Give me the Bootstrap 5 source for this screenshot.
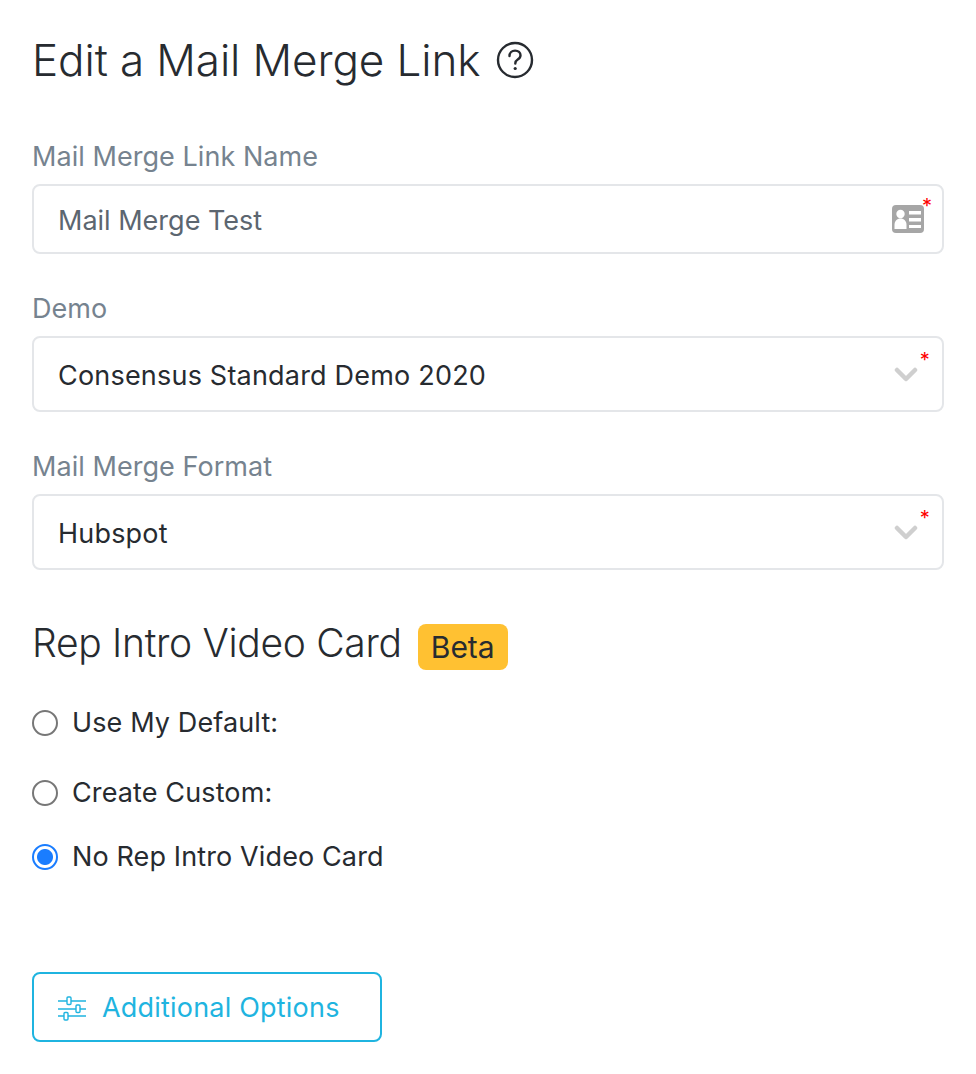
<!DOCTYPE html>
<html lang="en">
<head>
    <meta charset="UTF-8">
    <title>Edit a Mail Merge Link</title>
    <link href="https://cdn.jsdelivr.net/npm/bootstrap@5.3.3/dist/css/bootstrap.min.css" rel="stylesheet">
    <style>
        body {
            background: #fff;
            color: #272b30;
            font-family: Inter, "Liberation Sans", sans-serif;
        }
        .page-wrap {
            padding: 32px 32px 0 32px;
        }
        .page-title {
            font-size: 44px;
            font-weight: 300;
            line-height: 56px;
            letter-spacing: -0.1px;
            margin-bottom: 0;
        }
        .help-icon { margin-left: 16px; }
        .field-label {
            font-size: 27px;
            letter-spacing: .05px;
            color: #76838f;
            line-height: 32px;
            margin-top: 39px;
            margin-bottom: 11px;
            display: block;
            font-weight: 400;
        }
        .field-label.is-first { margin-top: 53px; }
        .field-box {
            position: relative;
            border: 2px solid #e4e6e9;
            border-radius: 8px;
            padding: 4px 24px 0;
            font-size: 27px;
            display: flex;
            align-items: center;
        }
        .box-input { height: 70px; color: #5c6670; }
        .box-select { height: 76px; color: #272b30; letter-spacing: .2px; }
        .req-star {
            position: absolute;
            color: #f00;
            font-size: 20px;
            line-height: 1;
            top: 10px;
            right: 10px;
        }
        .box-select .req-star { top: 12px; right: 12px; }
        .card-icon {
            position: absolute;
            right: 18px;
            top: 19px;
        }
        .chevron-icon {
            position: absolute;
            right: 24px;
            top: 29px;
        }
        .section-row { margin-top: 54px; }
        .section-title {
            font-size: 39px;
            font-weight: 300;
            line-height: 38px;
            letter-spacing: -0.3px;
            margin: 0;
        }
        .beta-tag {
            background: #ffc132;
            color: #272b30;
            border-radius: 8px;
            font-size: 30px;
            padding: 0 13px;
            line-height: 46px;
            margin-left: 16px;
        }
        .radio-row {
            font-size: 27px;
            letter-spacing: .12px;
            display: flex;
            align-items: center;
            gap: 14px;
            line-height: 32px;
        }
        .radio-first { margin-top: 37px; }
        .radio-second { margin-top: 38px; }
        .radio-third { margin-top: 32px; }
        .radio-dot {
            width: 26px;
            height: 26px;
            border: 2px solid #777;
            border-radius: 50%;
            flex: none;
        }
        .radio-dot.is-on {
            border: 2px solid #1a7dff;
            background: radial-gradient(circle, #1a7dff 0 7.5px, #fff 8.5px);
        }
        .options-btn {
            width: 350px;
            height: 70px;
            margin-top: 99px;
            border: 2px solid #1fb4e0;
            border-radius: 8px;
            color: #1fb4e0;
            background: #fff;
            font-size: 27px;
            letter-spacing: .2px;
            padding: 2px 24px 0;
            gap: 16px;
        }
    </style>
</head>
<body>
<div class="page-wrap">
    <h1 class="page-title d-flex align-items-center">Edit a Mail Merge Link
        <svg class="help-icon" width="38" height="38" viewBox="0 0 38 38" fill="none" stroke="#272b30" stroke-width="2.4">
            <circle cx="19" cy="19" r="17"/>
            <path d="M13.500 15c0-3.400 2.400-5.400 5.600-5.400 3.200 0 5.400 2 5.400 4.700 0 2-1.100 3.200-2.800 4.300-1.700 1.100-2.400 1.900-2.400 3.900" stroke-linecap="round"/>
            <circle cx="19.200" cy="27.500" r="1.600" fill="#272b30" stroke="none"/>
        </svg>
    </h1>

    <label class="field-label is-first">Mail Merge Link Name</label>
    <div class="field-box box-input">Mail Merge Test
        <svg class="card-icon" width="32" height="28" viewBox="0 0 32 28"><rect width="32" height="28" rx="4" fill="#a6a6a6"/><circle cx="8.500" cy="9" r="4.200" fill="#fff"/><path d="M2.500 24v-4c0-4 2.500-6.500 6-6.500s6 2.500 6 6.500v4z" fill="#fff"/><path d="M17 6h12v3.500H17zM17 13h12v3.500H17zM17 20h12v3H17z" fill="#fff"/></svg>
        <span class="req-star">*</span>
    </div>

    <label class="field-label">Demo</label>
    <div class="field-box box-select">Consensus Standard Demo 2020
        <svg class="chevron-icon" width="24" height="15" viewBox="0 0 24 15" fill="none" stroke="#cfcfcf" stroke-width="4.500" stroke-linecap="round" stroke-linejoin="round"><path d="M3 3l9 9 9-9"/></svg>
        <span class="req-star">*</span>
    </div>

    <label class="field-label">Mail Merge Format</label>
    <div class="field-box box-select">Hubspot
        <svg class="chevron-icon" width="24" height="15" viewBox="0 0 24 15" fill="none" stroke="#cfcfcf" stroke-width="4.500" stroke-linecap="round" stroke-linejoin="round"><path d="M3 3l9 9 9-9"/></svg>
        <span class="req-star">*</span>
    </div>

    <div class="section-row d-flex align-items-start">
        <h2 class="section-title">Rep Intro Video Card</h2>
        <span class="beta-tag">Beta</span>
    </div>

    <div class="radio-row radio-first"><span class="radio-dot"></span>Use My Default:</div>
    <div class="radio-row radio-second"><span class="radio-dot"></span>Create Custom:</div>
    <div class="radio-row radio-third"><span class="radio-dot is-on"></span>No Rep Intro Video Card</div>

    <button class="btn options-btn d-flex align-items-center" type="button">
        <svg width="28" height="25" viewBox="0 0 28 25" fill="none" stroke="#1fb4e0" stroke-width="1.400"><path d="M0 5h9M13 5h15M0 13h18M22 13h6M0 20h6M10 20h18"/><rect x="9" y="1" width="4" height="7.500" rx="1"/><rect x="18" y="9" width="4" height="7.500" rx="1"/><rect x="6" y="16.500" width="4" height="7.500" rx="1"/></svg>
        Additional Options
    </button>
</div>
<script src="https://cdn.jsdelivr.net/npm/bootstrap@5.3.3/dist/js/bootstrap.bundle.min.js"></script>
</body>
</html>
